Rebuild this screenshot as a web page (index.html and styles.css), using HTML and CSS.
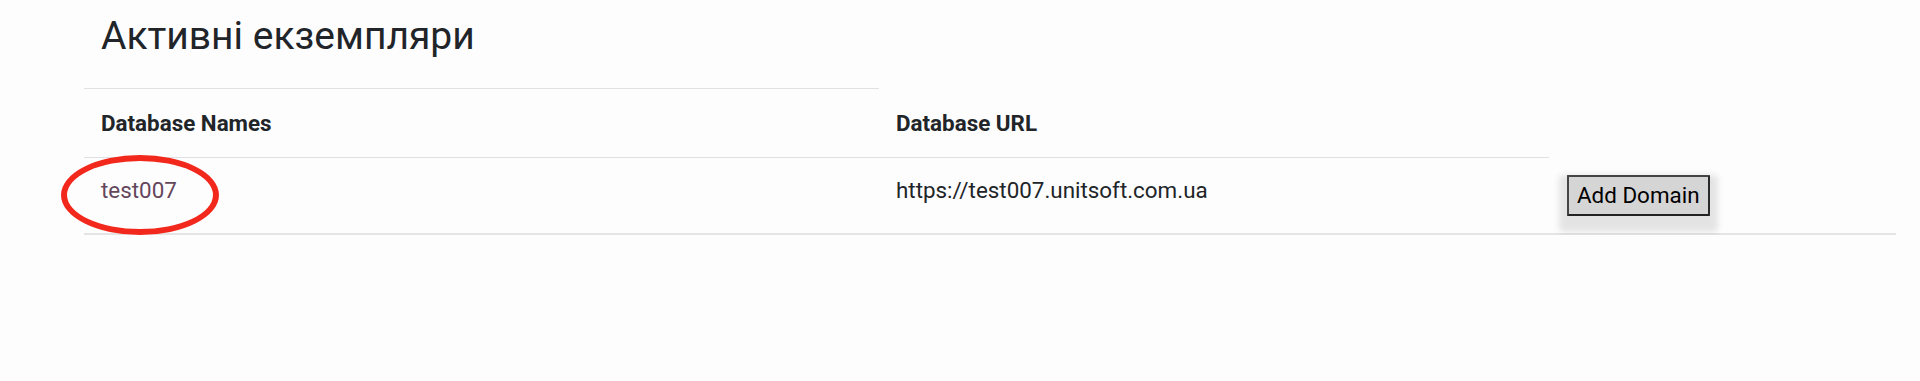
FILE: index.html
```html
<!DOCTYPE html>
<html lang="uk">
<head>
<meta charset="utf-8">
<title>Активні екземпляри</title>
<link rel="stylesheet" href="styles.css">
</head>
<body>
<main class="page">
  <h2 class="title">Активні екземпляри</h2>
  <div class="table">
    <div class="cell th th-first">Database Names</div>
    <div class="cell th">Database URL</div>
    <div class="cell th th-empty"></div>

    <div class="cell td td-line td-name">
      <a class="db-link" href="#">test007</a>
      <span class="annot"></span>
    </div>
    <div class="cell td td-line">https://test007.unitsoft.com.ua</div>
    <div class="cell td"><button class="btn" type="button">Add Domain</button></div>
  </div>
</main>
</body>
</html>
```
FILE: styles.css
```css
html, body {
  margin: 0;
  padding: 0;
  background: #fdfdfd;
}

body {
  font-family: Roboto, "Noto Sans", "Liberation Sans", sans-serif;
  color: #212529;
  font-size: 22.4px;
  line-height: 32px;
}

.page {
  padding-left: 84px;
  padding-right: 24px;
}

.title {
  margin: 12px 0 28px 0;
  padding-left: 17px;
  font-size: 39px;
  line-height: 48px;
  font-weight: 400;
  color: #212529;
}

.table {
  display: grid;
  grid-template-columns: 795px 670px 347px;
  border-bottom: 2px solid #e4e4e4;
}

.cell {
  padding: 18px 17px 18px 17px;
  border-top: 1px solid transparent;
}

.th {
  font-weight: 700;
}

.th-first {
  border-top-color: #dfe1e4;
}

.td {
  padding-top: 16px;
  padding-bottom: 17px;
}

.td-line {
  border-top-color: #dfe1e4;
}

.td-name {
  position: relative;
}

.db-link {
  color: #64465b;
  text-decoration: none;
}

.annot {
  position: absolute;
  left: -23px;
  top: -3px;
  width: 146px;
  height: 68px;
  border: 6px solid #f3281d;
  border-radius: 50%;
  pointer-events: none;
}

.btn {
  margin-left: 1px;
  margin-top: 1px;
  font-family: Roboto, "Noto Sans", "Liberation Sans", sans-serif;
  font-size: 22.4px;
  line-height: 25px;
  color: #000;
  background: #d5d5d5;
  border: 2px solid #444;
  border-bottom-color: #222;
  border-right-color: #2a2a2a;
  border-radius: 1px;
  padding: 6px 8px;
  box-shadow: 0 8px 6px 8px rgba(0, 0, 0, 0.1);
}
```
